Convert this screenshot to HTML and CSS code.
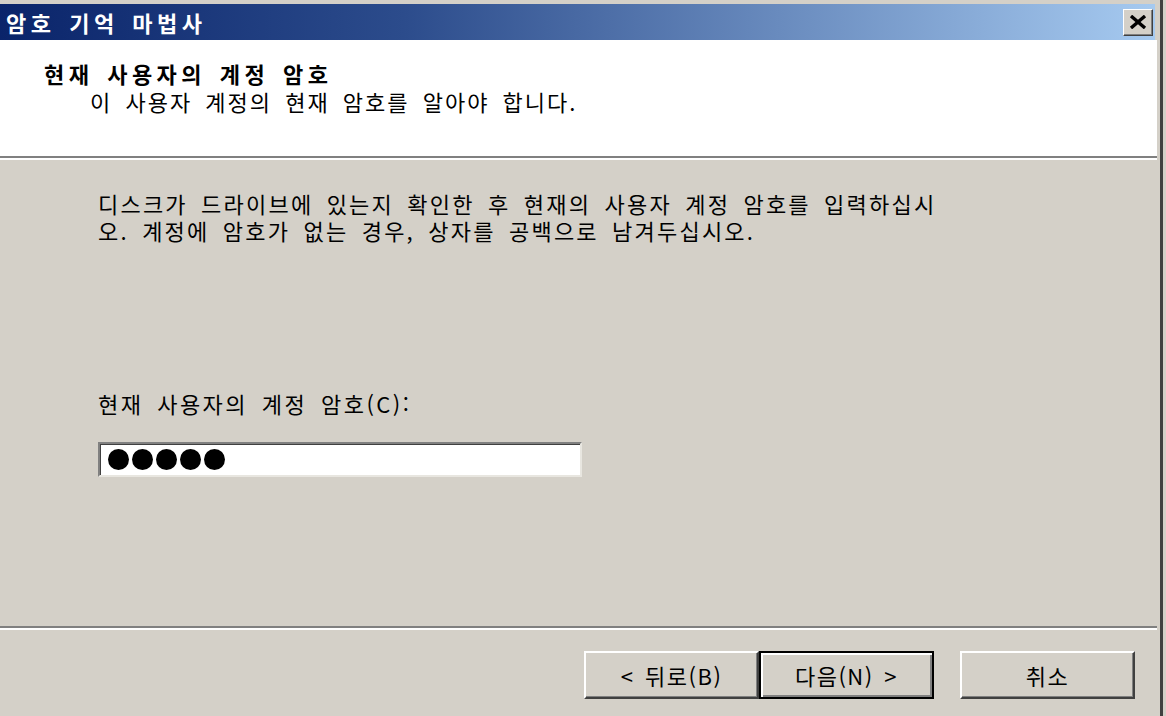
FILE: index.html
```html
<!DOCTYPE html>
<html lang="ko">
<head>
    <meta charset="UTF-8">
    <meta name="viewport" content="width=device-width, initial-scale=1.0">
    <title>암호 기억 마법사</title>
    <link rel="stylesheet" href="styles.css">
</head>
<body>
    <div class="window">
        <div class="titlebar">
            <span class="title">암호 기억 마법사</span>
            <button class="close" type="button" aria-label="닫기">
                <svg width="18" height="14" viewBox="0 0 18 14">
                    <path d="M2 1 L16 13 M16 1 L2 13" stroke="#000" stroke-width="3.4" fill="none"/>
                </svg>
            </button>
        </div>

        <div class="header">
            <h1>현재 사용자의 계정 암호</h1>
            <p>이 사용자 계정의 현재 암호를 알아야 합니다.</p>
        </div>

        <div class="content">
            <p class="intro">디스크가 드라이브에 있는지 확인한 후 현재의 사용자 계정 암호를 입력하십시<br>오. 계정에 암호가 없는 경우, 상자를 공백으로 남겨두십시오.</p>

            <label class="field-label" for="pw">현재 사용자의 계정 암호(C):</label>
            <div class="password" id="pw">
                <span class="dot"></span>
                <span class="dot"></span>
                <span class="dot"></span>
                <span class="dot"></span>
                <span class="dot"></span>
            </div>
        </div>

        <div class="footer">
            <button class="btn" type="button">&lt; 뒤로(B)</button>
            <button class="btn default" type="button">다음(N) &gt;</button>
            <button class="btn cancel" type="button">취소</button>
        </div>
    </div>
</body>
</html>
```

FILE: styles.css
```css
body {
    margin: 0;
    background-color: #d4d0c8;
    font-family: "Noto Sans CJK KR", "Noto Sans", sans-serif;
    color: #000;
}

.window {
    width: 1160px;
    height: 712px;
    padding-top: 4px;
    border-right: 3px solid #404040;
    display: flex;
    flex-direction: column;
}

/* Title bar */
.titlebar {
    height: 36px;
    margin-right: 5px;
    padding: 0 2px 0 6px;
    display: flex;
    align-items: center;
    justify-content: space-between;
    background: linear-gradient(to right, #0a246a 0%, #2c4c8c 35%, #a6caf0 100%);
}
.title {
    color: #fff;
    font-size: 22px;
    font-weight: bold;
    letter-spacing: 4.5px;
    word-spacing: 3px;
    line-height: 26px;
}
.close {
    width: 30px;
    height: 27px;
    padding: 0;
    display: flex;
    align-items: center;
    justify-content: center;
    background-color: #d4d0c8;
    border: 1px solid;
    border-color: #fff #404040 #404040 #fff;
    box-shadow: inset -1px -1px 0 #808080;
}

/* White header */
.header {
    height: 118px;
    margin-right: 3px;
    padding-left: 44px;
    box-sizing: border-box;
    padding-top: 20px;
    background-color: #fff;
    border-bottom: 2px solid #808080;
    box-shadow: 0 2px 0 #fff;
    margin-bottom: 2px;
}
.header h1 {
    margin: 0;
    font-size: 22px;
    font-weight: bold;
    letter-spacing: 4.5px;
    word-spacing: 3px;
    line-height: 26px;
}
.header p {
    margin: 2px 0 0 46px;
    font-size: 22px;
    letter-spacing: 2px;
    word-spacing: 5px;
    line-height: 26px;
}

/* Body */
.content {
    height: 468px;
    box-sizing: border-box;
    margin-right: 3px;
    padding: 30px 0 0 98px;
    border-bottom: 2px solid #808080;
    box-shadow: 0 2px 0 #fff;
}
.intro {
    margin: 0;
    font-size: 22px;
    letter-spacing: 2.2px;
    word-spacing: 5px;
    line-height: 27px;
}
.field-label {
    display: block;
    margin-top: 146px;
    font-size: 22px;
    letter-spacing: 2.5px;
    word-spacing: 5px;
    line-height: 26px;
}
.password {
    margin-top: 26px;
    width: 484px;
    height: 35px;
    box-sizing: border-box;
    padding-left: 8px;
    display: flex;
    align-items: center;
    gap: 3px;
    background-color: #fff;
    border: 2px solid;
    border-color: #808080 #e8e6e0 #e8e6e0 #808080;
    box-shadow: inset 1px 1px 0 #404040;
}
.dot {
    width: 21px;
    height: 21px;
    border-radius: 50%;
    background-color: #000;
}

/* Buttons */
.footer {
    margin-top: 2px;
    padding: 21px 25px 0 0;
    display: flex;
    justify-content: flex-end;
}
.btn {
    width: 175px;
    height: 48px;
    padding: 0;
    font-family: inherit;
    font-size: 22px;
    letter-spacing: 1.5px;
    word-spacing: 3px;
    color: #000;
    background-color: #d4d0c8;
    border: 2px solid;
    border-color: #fff #404040 #404040 #fff;
    box-shadow: inset -1px -1px 0 #808080;
}
.btn.default {
    border: 2px solid #000;
    box-shadow: inset 2px 2px 0 #fff, inset -2px -2px 0 #808080;
}
.btn.cancel {
    margin-left: 26px;
}
```
